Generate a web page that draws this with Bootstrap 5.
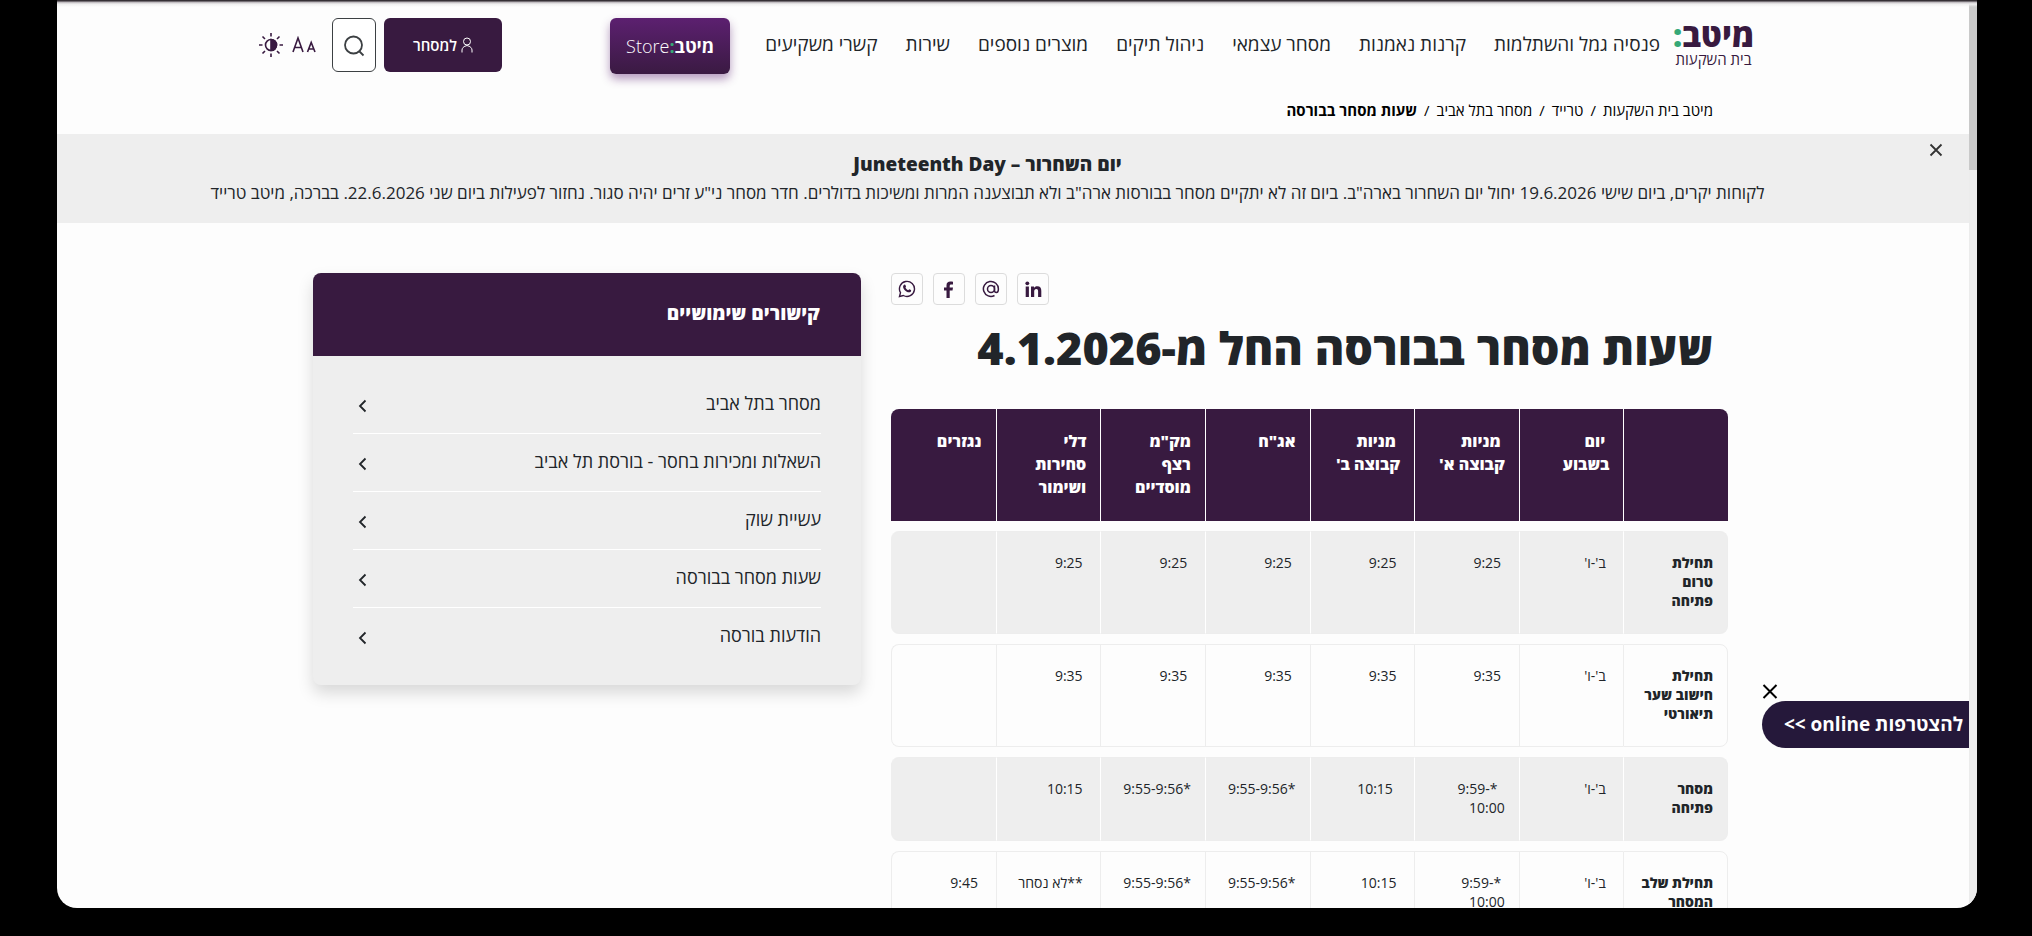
<!DOCTYPE html>
<html lang="he" dir="rtl">
<head>
<meta charset="utf-8">
<meta name="viewport" content="width=device-width, initial-scale=1">
<title>שעות מסחר בבורסה</title>
<link href="https://cdn.jsdelivr.net/npm/bootstrap@5.3.0/dist/css/bootstrap.min.css" rel="stylesheet">
<style>
  :root { --plum: #381a40; --ink: #212529; --mist: #eeeeee; --paper: #fdfdfd; }
  body { background: #000; color: var(--ink); font-family: "Open Sans", "Liberation Sans", sans-serif; font-size: 16px; height: 100vh; overflow: hidden; padding: 0 55px 28px 57px; }
  a { color: inherit; text-decoration: none; }
  .screen { background: var(--paper); border-radius: 0 0 20px 20px; }
  .screen::before { content: ""; position: absolute; inset: 0 0 auto 0; height: 7px; background: linear-gradient(#353035 0 1px, #b5b0b5 2px, #efefef 4px, rgba(253,253,253,0)); z-index: 3; }
  .scroll-track { width: 8px; background: #ececec; }
  .scroll-thumb { height: 170px; background: #cacaca; }
  .site-head { max-width: 1528px; padding: 18px 22px 0 9px; height: 90px; margin-inline-start: auto; margin-inline-end: auto; }
  .brand { width: 83px; color: var(--plum); }
  .brand-name { font-size: 32px; font-weight: 800; line-height: 34px; }
  .brand-sub { font-size: 15px; line-height: 14px; }
  .green { color: #36a877; }
  .main-nav { font-size: 19px; gap: 28px; line-height: 28px; padding-top: 12px; margin-right: 12px; margin-left: 35px; }
  .store-btn { width: 120px; height: 56px; border: 0; border-radius: 6px; background: linear-gradient(#5c2070, #3a1a42); color: #fff; font-size: 18px; font-weight: 300; box-shadow: 0 5px 10px rgba(92,32,112,.45); }
  .trade-btn { width: 118px; height: 54px; border: 0; border-radius: 6px; background: var(--plum); color: #fff; font-size: 15px; font-weight: 600; }
  .search-btn { width: 44px; height: 54px; border: 1px solid #3c4043; border-radius: 6px; background: #fff; }
  .icon-btn { border: 0; background: none; padding: 0; color: var(--plum); line-height: 1; }
  .inner { max-width: 1430px; }
  .crumbs { font-size: 15px; line-height: 20px; margin: 0; padding: 10px 15px 14px; color: #000; }
  .crumbs .breadcrumb-item + .breadcrumb-item { padding: 0 7px 0 0; }
  .crumbs .breadcrumb-item + .breadcrumb-item::before { float: none; padding: 0 0 0 7px; color: #000; font-weight: 400; }
  .crumbs .active { color: #000; font-weight: 700; }
  .notice { background: var(--mist); padding: 17px 51px 15px 0; }
  .notice h2 { font-size: 19px; font-weight: 800; line-height: 26px; margin: 0; }
  .notice p { font-size: 17px; font-weight: 500; line-height: 31px; margin: 0; }
  .notice-x { top: 6px; right: 26px; }
  .page-cols { padding: 50px 0 0 15px; gap: 30px; }
  .hours { flex: 837 1 0; min-width: 0; }
  .side { flex: 548 1 0; min-width: 0; }
  .share { gap: 10px; }
  .share a { width: 32px; height: 32px; border: 1px solid #dcdcdc; border-radius: 4px; color: var(--plum); }
  h1 { font-size: 45px; font-weight: 800; line-height: 60px; margin: 13px 15px 31px; }
  .times { width: 100%; table-layout: fixed; border-collapse: separate; border-spacing: 0 10px; margin-top: -10px; font-size: 14px; font-weight: 500; line-height: 19px; }
  .times th, .times td { vertical-align: top; padding: 21px 14px 23px; border-style: solid; border-width: 1px 0 1px 1px; border-color: #ededed; }
  .times tr > :first-child { border-right-width: 1px; border-radius: 0 8px 8px 0; }
  .times tr > :last-child { border-radius: 8px 0 0 8px; }
  .times thead th { background: var(--plum); color: #fff; font-size: 16px; font-weight: 800; line-height: 23px; padding-bottom: 22px; border-width: 0 0 0 1px; border-color: #fff; }
  .times thead tr > :first-child { border-radius: 0 8px 0 0; border-right-width: 0; }
  .times thead tr > :last-child { border-radius: 8px 0 0 0; border-left-width: 0; }
  .times tbody th { font-weight: 800; }
  .times tbody tr:nth-child(odd) > * { background: var(--mist); border-left-color: #fff; }
  .times tbody tr:nth-child(odd) > :last-child { border-left-color: var(--mist); }
  .links { border-radius: 8px; background: var(--mist); box-shadow: 0 8px 16px rgba(0,0,0,.15); overflow: hidden; }
  .links h2 { background: var(--plum); color: #fff; font-size: 19px; font-weight: 800; line-height: 23px; padding: 29px 41px 31px; margin: 0; }
  .links ul { padding: 20px 40px; }
  .links li + li { border-top: 1px solid #fff; }
  .links li a { height: 57px; font-size: 18px; padding: 0 0 2px 5px; }
  .links svg { margin-top: 4px; }
  .join { right: 0; bottom: 160px; z-index: 2; }
  .join-btn { height: 47px; border: 0; border-radius: 24px 0 0 24px; background: #25183a; color: #fff; font-size: 19px; font-weight: 700; padding: 0 6px 0 22px; }
</style>
</head>
<body>
<div class="screen d-flex h-100 overflow-hidden position-relative">
  <div class="scroll-track flex-shrink-0"><div class="scroll-thumb"></div></div>
  <div class="flex-grow-1 position-relative overflow-hidden">
    <header class="site-head d-flex align-items-start">
      <a href="#" class="brand flex-shrink-0 text-center d-block">
        <div class="brand-name text-nowrap">מיטב<span class="green">:</span></div>
        <div class="brand-sub text-nowrap">בית השקעות</div>
      </a>
      <nav class="main-nav d-flex text-nowrap">
        <a href="#">פנסיה גמל והשתלמות</a>
        <a href="#">קרנות נאמנות</a>
        <a href="#">מסחר עצמאי</a>
        <a href="#">ניהול תיקים</a>
        <a href="#">מוצרים נוספים</a>
        <a href="#">שירות</a>
        <a href="#">קשרי משקיעים</a>
      </nav>
      <button type="button" class="store-btn p-0 text-nowrap"><span class="fw-bold">מיטב</span><span class="green fw-bold">:</span>Store</button>
      <div class="d-flex align-items-center me-auto">
        <button type="button" class="trade-btn d-flex align-items-center justify-content-center gap-1">
          <svg width="12" height="16" viewBox="0 0 12 16" fill="none" stroke="currentColor"><circle cx="6" cy="4.500" r="3.500"/><path d="M1 15.500v-2.500c0-2 2-3.500 3-3.800l2-.7 2 .7c1 .3 3 1.800 3 3.800v2.500"/></svg>
          למסחר
        </button>
        <button type="button" class="search-btn me-2 p-0" aria-label="חיפוש">
          <svg width="22" height="22" viewBox="0 0 22 22" fill="none" stroke="#3c4043" stroke-width="1.800"><circle cx="10.500" cy="10" r="8.500"/><path d="M16 16l4.500 4.500"/></svg>
        </button>
        <button type="button" class="icon-btn me-3" aria-label="גודל טקסט">
          <svg width="24" height="18" viewBox="0 0 24 18" fill="none" stroke="currentColor" stroke-width="1.600"><path d="M1 16L6 2l5 14M2.800 11.500h6.400M15.500 16l3.700-9.500L23 16M16.800 13h4.800"/></svg>
        </button>
        <button type="button" class="icon-btn me-2" aria-label="ניגודיות">
          <svg width="26" height="26" viewBox="0 0 26 26" fill="none" stroke="currentColor" stroke-width="1.600"><circle cx="13" cy="13" r="5.500"/><path d="M13 7.500a5.500 5.500 0 0 1 0 11z" fill="currentColor"/><path d="M13 1v3.500M13 21.500v3.500M1 13h3.500M21.500 13h3.500M4.500 4.500l2.500 2.500M19 19l2.500 2.500M4.500 21.500l2.500-2.500M19 7l2.500-2.500"/></svg>
        </button>
      </div>
    </header>

    <nav class="inner mx-auto">
      <ol class="breadcrumb crumbs">
        <li class="breadcrumb-item"><a href="#">מיטב בית השקעות</a></li>
        <li class="breadcrumb-item"><a href="#">טרייד</a></li>
        <li class="breadcrumb-item"><a href="#">מסחר בתל אביב</a></li>
        <li class="breadcrumb-item active">שעות מסחר בבורסה</li>
      </ol>
    </nav>

    <section class="notice text-center position-relative">
      <button type="button" class="icon-btn notice-x position-absolute" aria-label="סגירה">
        <svg width="14" height="14" viewBox="0 0 14 14" stroke="#333" stroke-width="1.800"><path d="M1.500 1.500l11 11M12.500 1.500l-11 11"/></svg>
      </button>
      <h2>יום השחרור – Juneteenth Day</h2>
      <p>לקוחות יקרים, ביום שישי 19.6.2026 יחול יום השחרור בארה"ב. ביום זה לא יתקיים מסחר בבורסות ארה"ב ולא תבוצענה המרות ומשיכות בדולרים. חדר מסחר ני"ע זרים יהיה סגור. נחזור לפעילות ביום שני 22.6.2026. בברכה, מיטב טרייד</p>
    </section>

    <main class="inner page-cols mx-auto d-flex align-items-start">
      <div class="hours">
        <div class="share d-flex justify-content-end">
          <a href="#" class="d-flex align-items-center justify-content-center" aria-label="LinkedIn"><svg width="17" height="17" viewBox="0 0 17 17" fill="currentColor"><circle cx="2.300" cy="2.300" r="1.900"/><path d="M.7 5.500h3.200V16H.7zM6 5.500h3v1.400c.6-1 1.700-1.700 3.300-1.700 3 0 4 1.900 4 4.700V16h-3.200v-5.400c0-1.400-.3-2.600-1.800-2.600s-2.100 1.100-2.100 2.600V16H6z"/></svg></a>
          <a href="#" class="d-flex align-items-center justify-content-center" aria-label="דוא״ל"><svg width="18" height="18" viewBox="0 0 18 18" fill="none" stroke="currentColor" stroke-width="1.500"><circle cx="9" cy="9" r="3.500"/><path d="M12.500 5.500v5c0 1.300.8 2 1.900 2s2-1.200 2-3.500A7.500 7.500 0 1 0 12.500 15.500"/></svg></a>
          <a href="#" class="d-flex align-items-center justify-content-center" aria-label="Facebook"><svg width="10" height="17" viewBox="0 0 10 17" fill="currentColor"><path d="M2.500 17V9.500H0v-3h2.500V4.300C2.500 1.700 4 .5 6.300.5c1 0 2 .1 2.700.2v2.700H7.300c-1.300 0-1.600.7-1.600 1.500v1.600H9l-.5 3H5.700V17z"/></svg></a>
          <a href="#" class="d-flex align-items-center justify-content-center" aria-label="WhatsApp"><svg width="18" height="18" viewBox="0 0 18 18"><path d="M1.500 16.500l1-3.800a7.500 7.500 0 1 1 2.900 2.800z" fill="none" stroke="currentColor" stroke-width="1.400"/><path d="M6.200 4.800c.6-.5 1-.3 1.200.2l.6 1.400c.1.400-.6 1-.6 1.200.5 1.100 1.500 2.100 2.800 2.600.3 0 .8-1 1.200-.9l1.500.8c.5.300.2 1.400-.4 1.800-1.500 1.200-4.300-.1-5.700-1.700-1.600-1.800-2.600-4.100-.6-5.400z" fill="currentColor"/></svg></a>
        </div>
        <h1>שעות מסחר בבורסה החל מ-4.1.2026</h1>
        <table class="times">
          <thead>
            <tr>
              <th></th>
              <th>&nbsp;יום<br>בשבוע</th>
              <th>&nbsp;מניות<br><span class="text-nowrap">קבוצה א'</span></th>
              <th>&nbsp;מניות<br><span class="text-nowrap">קבוצה ב'</span></th>
              <th>אג"ח</th>
              <th>מק"מ<br>רצף<br>מוסדיים</th>
              <th>דלי<br>סחירות<br>ושימור</th>
              <th>נגזרים</th>
            </tr>
          </thead>
          <tbody>
            <tr><th>תחילת<br>טרום<br>פתיחה</th><td>&nbsp;ב'-ו'</td><td>&nbsp;9:25</td><td>&nbsp;9:25</td><td>&nbsp;9:25</td><td>&nbsp;9:25</td><td>&nbsp;9:25</td><td></td></tr>
            <tr><th class="text-nowrap">תחילת<br>חישוב שער<br>תיאורטי</th><td>&nbsp;ב'-ו'</td><td>&nbsp;9:35</td><td>&nbsp;9:35</td><td>&nbsp;9:35</td><td>&nbsp;9:35</td><td>&nbsp;9:35</td><td></td></tr>
            <tr><th>מסחר<br>פתיחה</th><td>&nbsp;ב'-ו'</td><td>&nbsp;&nbsp;*-9:59<br>10:00</td><td>&nbsp;&nbsp;10:15</td><td class="text-nowrap">*9:55-9:56</td><td class="text-nowrap">*9:55-9:56</td><td>&nbsp;10:15</td><td></td></tr>
            <tr><th class="text-nowrap">תחילת שלב<br>המסחר</th><td>&nbsp;ב'-ו'</td><td>&nbsp;*-9:59<br>10:00</td><td>&nbsp;10:15</td><td class="text-nowrap">*9:55-9:56</td><td class="text-nowrap">*9:55-9:56</td><td class="text-nowrap">&nbsp;**לא נסחר</td><td>&nbsp;9:45</td></tr>
          </tbody>
        </table>
      </div>
      <aside class="side">
        <div class="links">
          <h2>קישורים שימושיים</h2>
          <ul class="list-unstyled m-0">
            <li><a href="#" class="d-flex align-items-center justify-content-between">מסחר בתל אביב <svg width="9" height="14" viewBox="0 0 9 14" fill="none" stroke="currentColor" stroke-width="1.800"><path d="M7.500 1.500L2 7l5.500 5.500"/></svg></a></li>
            <li><a href="#" class="d-flex align-items-center justify-content-between">השאלות ומכירות בחסר - בורסת תל אביב <svg width="9" height="14" viewBox="0 0 9 14" fill="none" stroke="currentColor" stroke-width="1.800"><path d="M7.500 1.500L2 7l5.500 5.500"/></svg></a></li>
            <li><a href="#" class="d-flex align-items-center justify-content-between">עשיית שוק <svg width="9" height="14" viewBox="0 0 9 14" fill="none" stroke="currentColor" stroke-width="1.800"><path d="M7.500 1.500L2 7l5.500 5.500"/></svg></a></li>
            <li><a href="#" class="d-flex align-items-center justify-content-between">שעות מסחר בבורסה <svg width="9" height="14" viewBox="0 0 9 14" fill="none" stroke="currentColor" stroke-width="1.800"><path d="M7.500 1.500L2 7l5.500 5.500"/></svg></a></li>
            <li><a href="#" class="d-flex align-items-center justify-content-between">הודעות בורסה <svg width="9" height="14" viewBox="0 0 9 14" fill="none" stroke="currentColor" stroke-width="1.800"><path d="M7.500 1.500L2 7l5.500 5.500"/></svg></a></li>
          </ul>
        </div>
      </aside>
    </main>

    <div class="join position-absolute d-flex flex-column align-items-end">
      <button type="button" class="icon-btn text-black" aria-label="סגירה"><svg width="16" height="18" viewBox="0 0 16 18" stroke="currentColor" stroke-width="2"><path d="M1.500 2l13 13M14.500 2l-13 13"/></svg></button>
      <button type="button" class="join-btn text-nowrap">להצטרפות online &gt;&gt;</button>
    </div>
  </div>
</div>
<script src="https://cdn.jsdelivr.net/npm/bootstrap@5.3.0/dist/js/bootstrap.bundle.min.js"></script>
</body>
</html>
